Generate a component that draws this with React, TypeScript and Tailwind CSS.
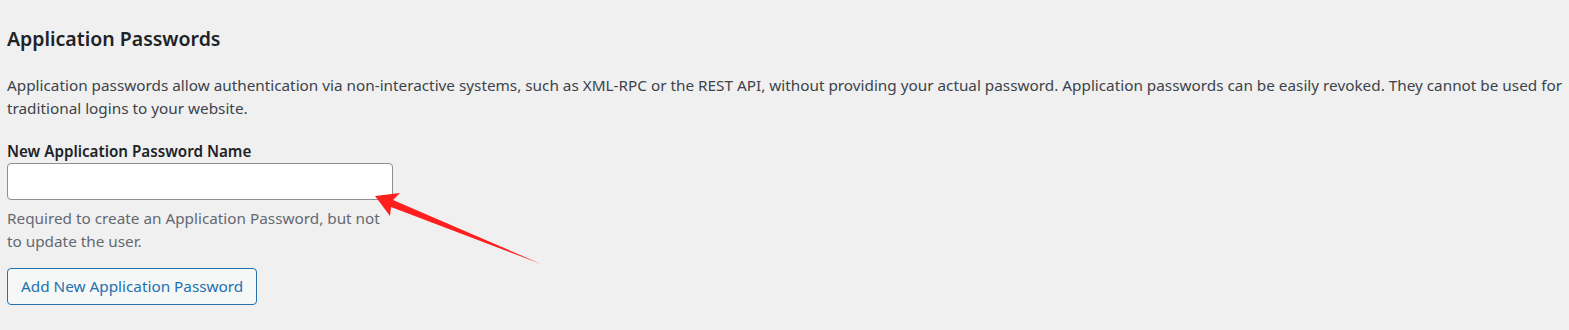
export default function App() {
  return (
    <div className="relative h-[330px] w-full overflow-hidden bg-[#f0f0f1] pl-[7px] pt-[26px] font-['Noto_Sans',sans-serif] text-[#3c434a]">
      <h2 className="text-[19.5px] font-semibold leading-[26px] text-[#1d2327]">Application Passwords</h2>

      <p className="mt-[22px] max-w-[1562px] text-[15.3px] leading-[23px]">
        Application passwords allow authentication via non-interactive systems, such as XML-RPC or the REST API, without providing your actual password. Application passwords can be easily revoked. They cannot be used for traditional logins to your website.
      </p>

      <label className="mt-[20px] block text-[15.2px] font-semibold leading-[23px] text-[#1d2327]">
        New Application Password Name
      </label>
      <input
        type="text"
        className="block h-[37px] w-[386px] rounded-[4px] border border-[#8c8f94] bg-white px-2 outline-none"
      />
      <p className="mt-[7px] w-[386px] text-[15.3px] leading-[23px] text-[#646970]">
        Required to create an Application Password, but not to update the user.
      </p>

      <button className="mt-[15px] block h-[37px] rounded-[4px] border border-[#2271b1] bg-[#f6f7f7] px-[13px] text-[15.3px] leading-[23px] text-[#2271b1]">
        Add New Application Password
      </button>

      <svg className="absolute left-0 top-0" width="1569" height="330" viewBox="0 0 1569 330">
        <polygon points="375,196 400,193 393,200 541,264 391,207 390,216" fill="#ff1f1f" />
      </svg>
    </div>
  )
}
